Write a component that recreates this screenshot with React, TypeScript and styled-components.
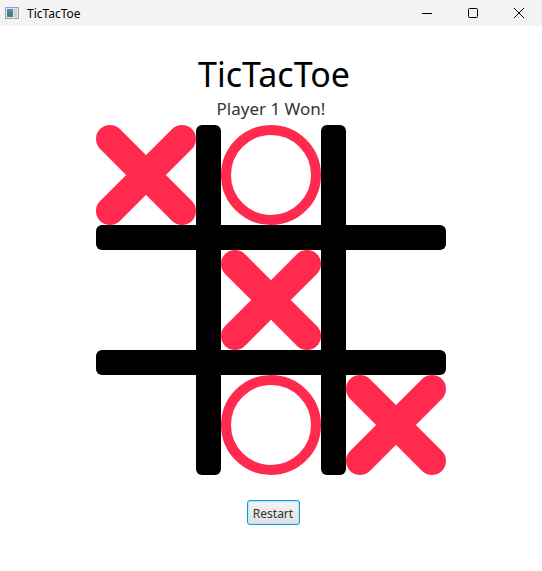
import React from "react";
import styled, { createGlobalStyle } from "styled-components";

const Global = createGlobalStyle`
  html, body { margin: 0; padding: 0; background: #ffffff; }
  body { font-family: "Noto Sans", "Open Sans", sans-serif; }
`;

const RED = "#ff2a4d";

const Window = styled.div`
  width: 542px;
  height: 571px;
  display: flex;
  flex-direction: column;
  background: #ffffff;
`;

const TitleBar = styled.div`
  height: 26px;
  background: #f3f3f3;
  display: flex;
  align-items: center;
  padding-left: 5px;
  box-sizing: border-box;
`;

const AppIcon = styled.svg`
  width: 14px;
  height: 12px;
  flex: none;
`;

const TitleText = styled.span`
  font-family: "Noto Sans", sans-serif;
  font-size: 12px;
  color: #000;
  margin-left: 8px;
  flex: 1;
`;

const Controls = styled.div`
  display: flex;
  height: 100%;
`;

const ControlButton = styled.div`
  width: 46px;
  height: 100%;
  display: flex;
  align-items: center;
  justify-content: center;
`;

const Content = styled.div`
  display: flex;
  flex-direction: column;
  align-items: center;
  padding-top: 28px;
`;

const Heading = styled.h1`
  margin: 0 0 0 6px;
  font-family: "Noto Sans", sans-serif;
  font-weight: 400;
  font-size: 34px;
  line-height: 40px;
  color: #000;
`;

const Status = styled.div`
  font-family: "Noto Sans", sans-serif;
  font-size: 17px;
  line-height: 18px;
  color: #333;
  margin-top: 6px;
`;

const Board = styled.div`
  margin-top: 7px;
  display: grid;
  grid-template-columns: 100px 25px 100px 25px 100px;
  grid-template-rows: 100px 25px 100px 25px 100px;
`;

const VBar = styled.div<{ $col: number }>`
  grid-column: ${(p) => p.$col};
  grid-row: 1 / -1;
  background: #000;
  border-radius: 6px;
`;

const HBar = styled.div<{ $row: number }>`
  grid-row: ${(p) => p.$row};
  grid-column: 1 / -1;
  background: #000;
  border-radius: 6px;
`;

const Cell = styled.div<{ $row: number; $col: number }>`
  grid-row: ${(p) => p.$row};
  grid-column: ${(p) => p.$col};
  position: relative;
  z-index: 1;
  display: flex;
`;

const Mark = styled.svg`
  width: 100px;
  height: 100px;
  display: block;
`;

const RestartButton = styled.button`
  margin-top: 25px;
  margin-left: 4px;
  width: 53px;
  height: 25px;
  padding: 1px 0 0;
  font-family: "Noto Sans", sans-serif;
  font-size: 12px;
  color: #333;
  background: linear-gradient(#f4f4f4, #e0e0e0);
  border: 1px solid #039ed3;
  border-radius: 3px;
  box-shadow: inset 0 0 0 1px #bfe6f4;
`;

const XMark = () => (
  <Mark viewBox="0 0 100 100">
    <g stroke={RED} strokeWidth={28} strokeLinecap="round">
      <line x1="14" y1="14" x2="86" y2="86" />
      <line x1="86" y1="14" x2="14" y2="86" />
    </g>
  </Mark>
);

const OMark = () => (
  <Mark viewBox="0 0 100 100">
    <circle cx="50" cy="50" r="45" fill="none" stroke={RED} strokeWidth={10} />
  </Mark>
);

const board: (string | null)[][] = [
  ["X", "O", null],
  [null, "X", null],
  [null, "O", "X"],
];

export default function App() {
  return (
    <Window>
      <Global />
      <TitleBar>
        <AppIcon viewBox="0 0 14 12">
          <rect x="0.5" y="0.5" width="13" height="11" fill="#e8e8e8" stroke="#9aa3ad" />
          <rect x="2" y="2" width="6" height="8" fill="#3c8a7c" />
          <rect x="2" y="2" width="6" height="3" fill="#4f86c6" />
          <rect x="9" y="2" width="3" height="8" fill="#c9ced4" />
        </AppIcon>
        <TitleText>TicTacToe</TitleText>
        <Controls>
          <ControlButton>
            <svg width="10" height="10" viewBox="0 0 10 10">
              <line x1="0" y1="5.5" x2="10" y2="5.5" stroke="#000" strokeWidth="1" />
            </svg>
          </ControlButton>
          <ControlButton>
            <svg width="10" height="10" viewBox="0 0 10 10">
              <rect x="0.5" y="0.5" width="9" height="9" rx="1" fill="none" stroke="#000" strokeWidth="1" />
            </svg>
          </ControlButton>
          <ControlButton>
            <svg width="10" height="10" viewBox="0 0 10 10">
              <path d="M0 0 L10 10 M10 0 L0 10" stroke="#000" strokeWidth="1" />
            </svg>
          </ControlButton>
        </Controls>
      </TitleBar>
      <Content>
        <Heading>TicTacToe</Heading>
        <Status>Player 1 Won!</Status>
        <Board>
          <VBar $col={2} />
          <VBar $col={4} />
          <HBar $row={2} />
          <HBar $row={4} />
          {board.map((row, r) =>
            row.map((v, c) =>
              v ? (
                <Cell key={`${r}-${c}`} $row={r * 2 + 1} $col={c * 2 + 1}>
                  {v === "X" ? <XMark /> : <OMark />}
                </Cell>
              ) : null
            )
          )}
        </Board>
        <RestartButton>Restart</RestartButton>
      </Content>
    </Window>
  );
}
